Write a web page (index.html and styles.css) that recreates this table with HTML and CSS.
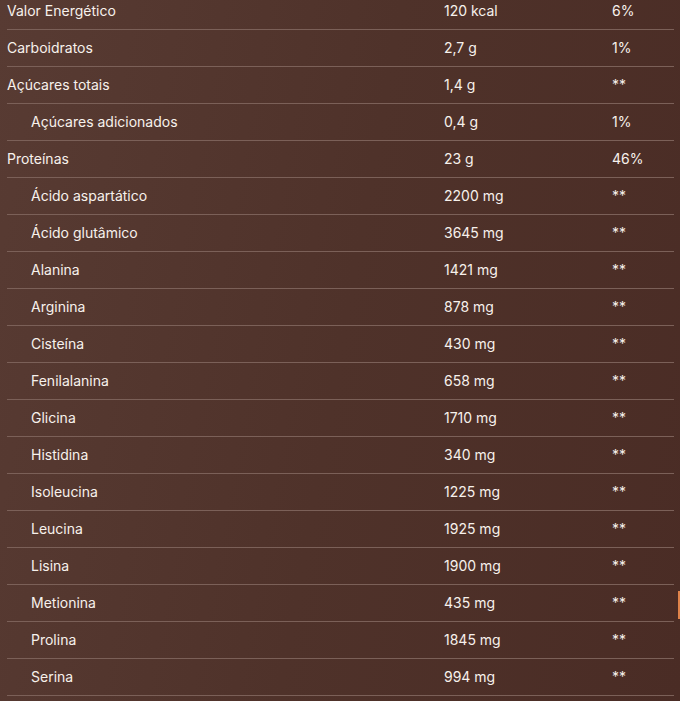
FILE: index.html
```html
<!DOCTYPE html>
<html lang="pt">
<head>
<meta charset="utf-8">
<link rel="stylesheet" href="styles.css">
</head>
<body>
<div class="panel">
  <div class="table">
    <div class="row"><span class="name">Valor Energético</span><span class="val">120 kcal</span><span class="pct">6%</span></div>
    <div class="row"><span class="name">Carboidratos</span><span class="val">2,7 g</span><span class="pct">1%</span></div>
    <div class="row"><span class="name">Açúcares totais</span><span class="val">1,4 g</span><span class="pct">**</span></div>
    <div class="row sub"><span class="name">Açúcares adicionados</span><span class="val">0,4 g</span><span class="pct">1%</span></div>
    <div class="row"><span class="name">Proteínas</span><span class="val">23 g</span><span class="pct">46%</span></div>
    <div class="row sub"><span class="name">Ácido aspartático</span><span class="val">2200 mg</span><span class="pct">**</span></div>
    <div class="row sub"><span class="name">Ácido glutâmico</span><span class="val">3645 mg</span><span class="pct">**</span></div>
    <div class="row sub"><span class="name">Alanina</span><span class="val">1421 mg</span><span class="pct">**</span></div>
    <div class="row sub"><span class="name">Arginina</span><span class="val">878 mg</span><span class="pct">**</span></div>
    <div class="row sub"><span class="name">Cisteína</span><span class="val">430 mg</span><span class="pct">**</span></div>
    <div class="row sub"><span class="name">Fenilalanina</span><span class="val">658 mg</span><span class="pct">**</span></div>
    <div class="row sub"><span class="name">Glicina</span><span class="val">1710 mg</span><span class="pct">**</span></div>
    <div class="row sub"><span class="name">Histidina</span><span class="val">340 mg</span><span class="pct">**</span></div>
    <div class="row sub"><span class="name">Isoleucina</span><span class="val">1225 mg</span><span class="pct">**</span></div>
    <div class="row sub"><span class="name">Leucina</span><span class="val">1925 mg</span><span class="pct">**</span></div>
    <div class="row sub"><span class="name">Lisina</span><span class="val">1900 mg</span><span class="pct">**</span></div>
    <div class="row sub"><span class="name">Metionina</span><span class="val">435 mg</span><span class="pct">**</span></div>
    <div class="row sub"><span class="name">Prolina</span><span class="val">1845 mg</span><span class="pct">**</span></div>
    <div class="row sub"><span class="name">Serina</span><span class="val">994 mg</span><span class="pct">**</span></div>
  </div>
  <div class="tab"></div>
</div>
</body>
</html>
```
FILE: styles.css
```css
html, body {
  margin: 0;
  padding: 0;
  height: 100%;
}
body {
  background: linear-gradient(100deg, #583b33 0%, #4f322a 50%, #4a2c25 100%);
  font-family: Inter, "Noto Sans", sans-serif;
  color: #f7f1ec;
  overflow: hidden;
}
.panel {
  position: relative;
  height: 701px;
  padding: 0 6px 0 7px;
}
.table {
  margin-top: -7px;
}
.row {
  display: grid;
  grid-template-columns: 437px 168px 1fr;
  align-items: center;
  box-sizing: border-box;
  height: 37px;
  padding-bottom: 2px;
  border-bottom: 1px solid #7b6058;
  font-size: 14px;
  line-height: 17px;
}
.row.sub .name {
  padding-left: 24px;
}
.tab {
  position: absolute;
  right: 0;
  top: 598px;
  width: 2px;
  height: 28px;
  background: #e0834a;
}
```
